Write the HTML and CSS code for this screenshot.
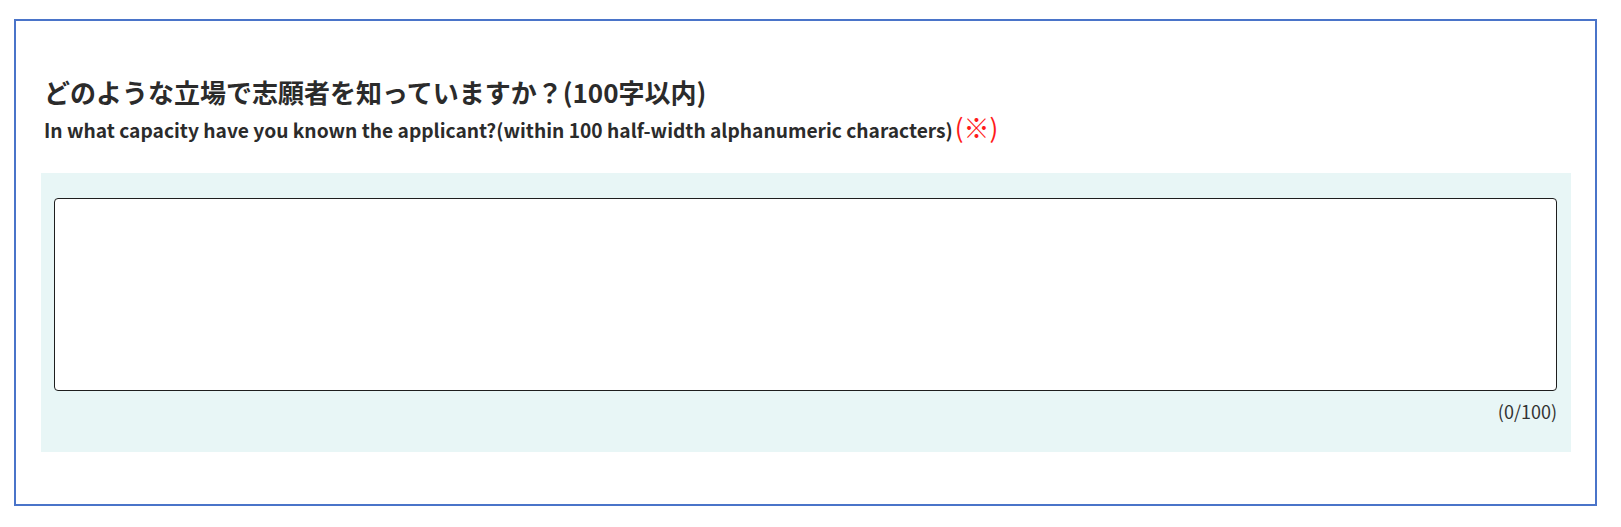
FILE: index.html
```html
<!DOCTYPE html>
<html lang="ja">
<head>
<meta charset="utf-8">
<link rel="stylesheet" href="styles.css">
</head>
<body>
<section class="card">
  <div class="heading">
    <h2 class="title-ja">どのような立場で志願者を知っていますか？(100字以内)</h2>
    <p class="title-en">In what capacity have you known the applicant?(within 100 half-width alphanumeric characters)<span class="req">(※)</span></p>
  </div>
  <div class="field">
    <textarea class="input"></textarea>
    <div class="counter">(0/100)</div>
  </div>
</section>
</body>
</html>
```
FILE: styles.css
```css
html, body {
  margin: 0;
  padding: 0;
  background: #ffffff;
}
body {
  padding: 19px 0 0 14px;
  font-family: "Noto Sans CJK JP", "Noto Sans", sans-serif;
  color: #2b2b2b;
}
.card {
  border: 2px solid #4a74c9;
  height: 430px;
  width: 1530px;
  padding: 53px 24px 0 25px;
  box-sizing: content-box;
}
.heading {
  padding-left: 3px;
}
.title-ja {
  margin: 0;
  font-size: 26px;
  line-height: 35px;
  font-weight: 700;
}
.title-en {
  margin: 8px 0 0;
  font-size: 19.2px;
  line-height: 26px;
  font-weight: 700;
}
.req {
  color: #ff1a1a;
  font-weight: 400;
  font-size: 26px;
  line-height: 20px;
  margin-left: 2px;
}
.field {
  margin-top: 30px;
  background: #e8f6f6;
  padding: 25px 14px 0 13px;
  height: 254px;
}
.input {
  display: block;
  width: 100%;
  height: 193px;
  box-sizing: border-box;
  border: 1.5px solid #1e1e1e;
  border-radius: 4px;
  background: #fff;
  resize: none;
  margin: 0;
  padding: 6px;
}
.counter {
  text-align: right;
  font-size: 18px;
  line-height: 22px;
  margin-top: 9px;
  color: #333;
}
```
